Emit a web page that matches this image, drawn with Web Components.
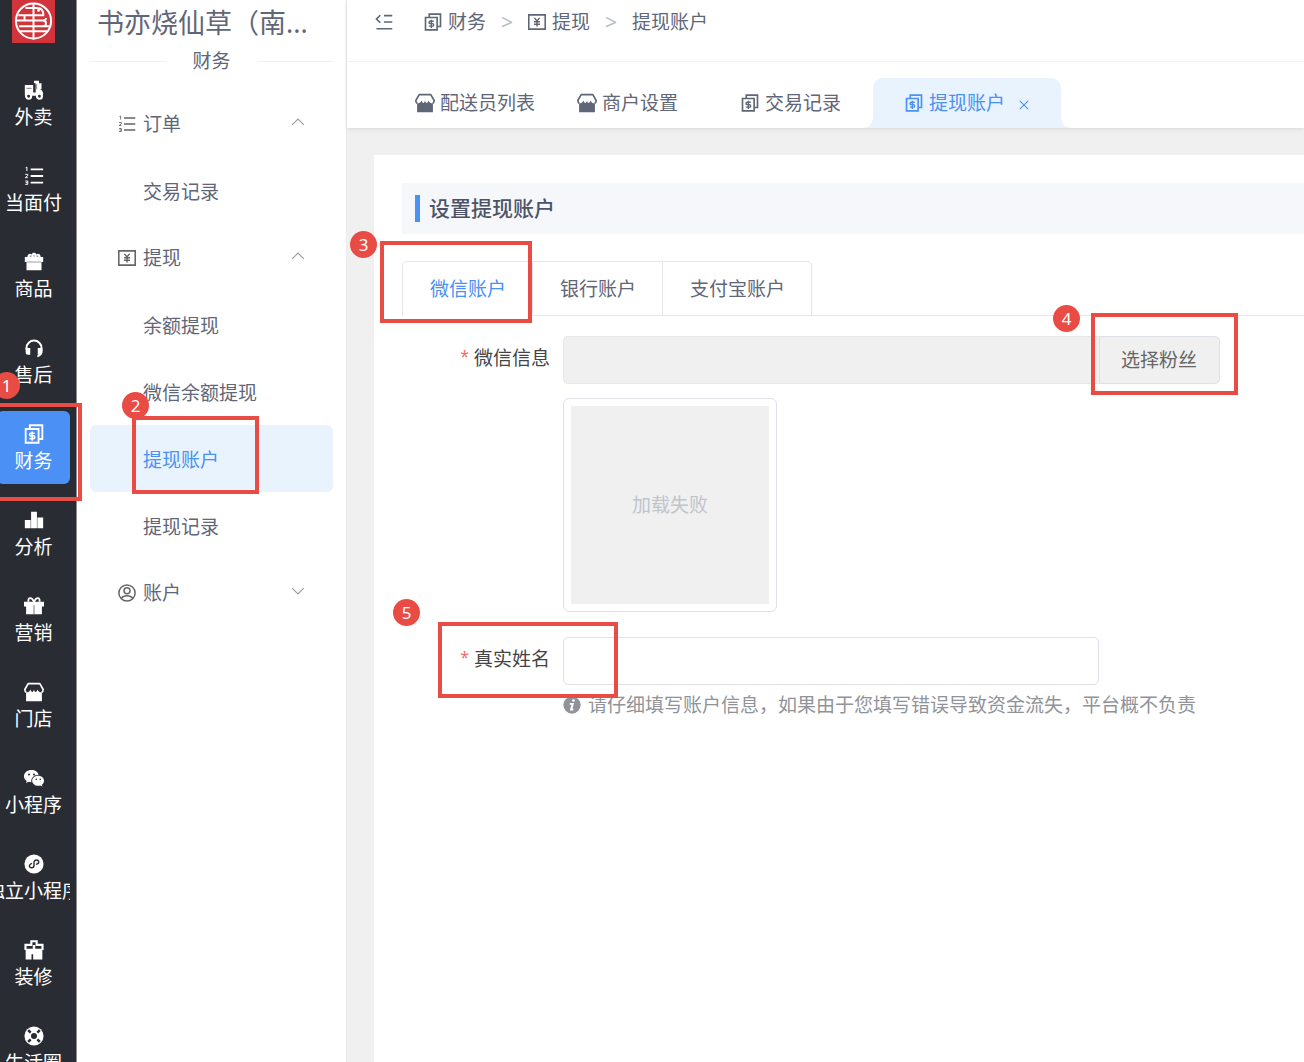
<!DOCTYPE html>
<html lang="zh-CN">
<head>
<meta charset="utf-8">
<meta name="viewport" content="width=device-width, initial-scale=1">
<title>提现账户</title>
<style>
  html, body { margin: 0; height: 100%; }
  body {
    font-family: "Noto Sans", "Noto Sans CJK SC", sans-serif;
    font-size: 19px;
    line-height: 28px;
    color: #5f6678;
    background: #f0f0f0;
    overflow: hidden;
    --blue: #4a90f5;
    --blue-soft: #e8f3fe;
    --line: #e4e6ec;
    --red: #e84c44;
  }
</style>
</head>
<body>
<admin-shell>
  <icon-rail slot="rail">
    <rail-item icon="scooter">外卖</rail-item>
    <rail-item icon="list">当面付</rail-item>
    <rail-item icon="basket">商品</rail-item>
    <rail-item icon="headset">售后</rail-item>
    <rail-item icon="bill" active>财务</rail-item>
    <rail-item icon="chart">分析</rail-item>
    <rail-item icon="gift">营销</rail-item>
    <rail-item icon="shop">门店</rail-item>
    <rail-item icon="wechat">小程序</rail-item>
    <rail-item icon="mini">独立小程序</rail-item>
    <rail-item icon="brush">装修</rail-item>
    <rail-item icon="circle">生活圈</rail-item>
  </icon-rail>

  <side-menu slot="menu" store="书亦烧仙草（南..." heading="财务">
    <menu-group icon="list" label="订单" open>
      <menu-link>交易记录</menu-link>
    </menu-group>
    <menu-group icon="yen" label="提现" open>
      <menu-link>余额提现</menu-link>
      <menu-link>微信余额提现</menu-link>
      <menu-link active>提现账户</menu-link>
      <menu-link>提现记录</menu-link>
    </menu-group>
    <menu-group icon="user" label="账户"></menu-group>
  </side-menu>

  <crumb-bar slot="top"></crumb-bar>
  <page-tabs slot="top">
    <page-tab slot="pinned" icon="shop" pinned>配送员列表</page-tab>
    <page-tab slot="pinned" icon="shop" pinned>商户设置</page-tab>
    <page-tab icon="bill">交易记录</page-tab>
    <page-tab icon="bill" active>提现账户</page-tab>
  </page-tabs>

  <account-card>
    <section-title>设置提现账户</section-title>
    <account-tabs></account-tabs>
    <fan-field></fan-field>
    <name-field></name-field>
  </account-card>
</admin-shell>

<step-mark n="1" x="-10" y="403" w="92" h="98" cx="6" cy="385"></step-mark>
<step-mark n="2" x="132" y="416" w="127" h="78" cx="135" cy="405"></step-mark>
<step-mark n="3" x="380" y="241" w="152" h="82" cx="363" cy="244"></step-mark>
<step-mark n="4" x="1091" y="313" w="147" h="82" cx="1066" cy="318"></step-mark>
<step-mark n="5" x="438" y="622" w="180" h="76" cx="406" cy="612"></step-mark>

<script>
const ICONS = {
  scooter: `<path fill="currentColor" d="M1 6h10v9h3V4h-2V1h6v3h3v7h-2c3 1 4 3 4 6l-1 2H1z"/><path stroke="#2a2c34" stroke-opacity=".5" stroke-width="1.500" d="M3 10h6M15 5v6"/><circle cx="5.500" cy="19.500" r="3" fill="#2a2c34" stroke="currentColor" stroke-width="2.600"/><circle cx="18.500" cy="19.500" r="3" fill="#2a2c34" stroke="currentColor" stroke-width="2.600"/>`,
  list: `<path d="M8 4h15M8 12h15M8 20h15" stroke="currentColor" stroke-width="2.200"/><path d="M2 2l1.500-.6V6M1.500 10h3v1.500l-3 2.500h3M1.500 18h3v4h-3M2 20h2.500" fill="none" stroke="currentColor" stroke-width="1.200"/>`,
  basket: `<path fill="currentColor" d="M1 6h3c0-3 3-5 5-3 1-3 5-3 6 0 2-2 5 0 5 3h3v6H1zM3 12h18v10H3z"/><path stroke="#2a2c34" stroke-opacity=".35" stroke-width="1.600" d="M3 12h18"/><path stroke="#2a2c34" stroke-opacity=".6" stroke-width="1.400" d="M7 5.500l2-1M12 5.500V4M17 5.500l-2-1"/>`,
  headset: `<path fill="none" stroke="currentColor" stroke-width="2.300" d="M3 14v-2a9 9 0 0 1 18 0v4c0 4-2 5-5 6"/><path fill="currentColor" d="M2 12h5.500v8H5a3 3 0 0 1-3-3zM16.500 12H22v5a3 3 0 0 1-3 3h-2.500z"/>`,
  bill: `<path fill="none" stroke="currentColor" stroke-width="2.200" d="M7 6V1.500h15V18h-4M2 6h15.500v16.500H2z"/><path fill="none" stroke="currentColor" stroke-width="1.900" d="M13 11H8.200c-2 0-2 3.200 0 3.200h3.200c2 0 2 3.300 0 3.300H6.500M9.800 9v11"/>`,
  chart: `<path fill="currentColor" d="M1 12h7v10H1zM8.500 2h7v20h-7zM16 9h7v13h-7z"/>`,
  gift: `<path fill="none" stroke="currentColor" stroke-width="2.200" d="M12 7C9 0 4 2 5.500 7M12 7c3-7 8-5 6.500 0"/><path fill="currentColor" d="M0 7h24v5.500H0zM2.500 12h19v10h-19z"/><path stroke="#2a2c34" stroke-opacity=".5" stroke-width="1.500" d="M12 11v11"/>`,
  shop: `<path fill="none" stroke="currentColor" stroke-width="2" stroke-linejoin="round" d="M3 12.500c-1.500-.5-2-2-2-3.500l4-7h14l4 7c0 1.500-.5 3-2 3.500"/><path fill="currentColor" d="M2.500 12.500c2.500 0 4.500-1.200 5.300-3.500 1 4 3.500 4 4.200 0 .7 4 3.200 4 4.200 0 .8 2.300 2.800 3.500 5.300 3.500v10.500h-19z"/>`,
  wechat: `<path fill="currentColor" fill-rule="evenodd" d="M9 2.500c-5 0-9 3.200-9 7.300 0 2.300 1.200 4.300 3.200 5.600L2.500 18l3-1.500c1 .3 2 .5 3.300.5-.9-5 3.200-9 8.700-9C16.700 4.800 13.200 2.500 9 2.500zM6 6.500a1.200 1.200 0 1 1 0 2.400 1.200 1.200 0 0 1 0-2.400zm6 0a1.200 1.200 0 1 1 0 2.400 1.200 1.200 0 0 1 0-2.400z"/><path fill="currentColor" fill-rule="evenodd" d="M17 9.200c-4 0-7.200 2.700-7.200 6.100s3.200 6.100 7.200 6.100c.9 0 1.700-.1 2.500-.4l2.500 1.300-.6-2.200c1.600-1.200 2.600-2.900 2.600-4.800 0-3.400-3.100-6.100-7-6.100zm-2.300 3.300a1 1 0 1 1 0 2 1 1 0 0 1 0-2zm4.800 0a1 1 0 1 1 0 2 1 1 0 0 1 0-2z"/>`,
  mini: `<circle cx="12" cy="12" r="11.500" fill="currentColor"/><path fill="none" stroke="#2a2c34" stroke-width="1.700" stroke-linecap="round" d="M9 11.500c-3 .5-3.500 5 0 5 2 0 3-1.200 3-2.700V10c0-1.500 1.200-2.800 3-2.800 3.500 0 3.500 4.500 0 5"/>`,
  brush: `<path fill="none" stroke="currentColor" stroke-width="2.600" d="M1.800 12V5.800h7V1.500h6.400v4.300h7V12"/><path fill="currentColor" d="M2 10.500h20v13H11V17H9v6.500H2zM10.500 6h3v5h-3z"/>`,
  circle: `<circle cx="12" cy="12" r="11.500" fill="currentColor"/><circle cx="12" cy="12" r="3.600" fill="#2a2c34"/><path stroke="#2a2c34" stroke-width="3" d="M5 5l3 3M19 5l-3 3M5 19l3-3M19 19l-3-3"/>`,
  yen: `<path fill="none" stroke="currentColor" stroke-width="2.200" d="M1 2.500h22v19H1z"/><path fill="none" stroke="currentColor" stroke-width="2" d="M8.500 6.500l3.500 4 3.500-4M12 10v8M8 11.500h8M8 15h8"/>`,
  user: `<circle cx="12" cy="12" r="10.800" fill="none" stroke="currentColor" stroke-width="2"/><circle cx="12" cy="9" r="4" fill="none" stroke="currentColor" stroke-width="2"/><path fill="none" stroke="currentColor" stroke-width="2" d="M4.500 19c3-4.500 12-4.500 15 0"/>`,
  fold: `<path fill="none" stroke="currentColor" stroke-width="2.200" d="M7 3L2 8l5 5M12 3.500h11M12 12h11M2 21h21"/>`,
  up: `<path fill="none" stroke="currentColor" stroke-width="2" d="M2 17L12 7l10 10"/>`,
  down: `<path fill="none" stroke="currentColor" stroke-width="2" d="M2 7l10 10L22 7"/>`,
  close: `<path stroke="currentColor" stroke-width="2.600" d="M2 2l20 20M22 2L2 22"/>`,
  info: `<circle cx="12" cy="12" r="11.500" fill="currentColor"/><path fill="none" stroke="#fff" stroke-width="2.600" d="M9 10.500h4l-2.200 7.500h3"/><circle cx="14" cy="6" r="1.800" fill="#fff"/>`,
  logo: `<path fill="#d2343c" d="M0 0h24v24H0z"/><g fill="none" stroke="#fff" stroke-width="1.100"><circle cx="12" cy="11.700" r="9.800"/><path d="M12 2v20M7.500 4.500H14q3.500 0 3.500 4H3.500M2.500 11.500H17q2 0 2 1.600t-2 1.600H4M17 11.500q2 0 2-1.500M7 8.500v3M4.500 17.500h15M21 14.700h-4"/></g><circle cx="14.800" cy="5.800" r=".8" fill="#fff"/>`
};

/* Shared base: renders each element's markup once into an open shadow root. */
class Base extends HTMLElement {
  connectedCallback() {
    if (!this.shadowRoot) this.attachShadow({ mode: 'open' }).innerHTML = this.render();
  }
  attr(name) { return this.getAttribute(name) || ''; }
}
const define = (name, render) =>
  customElements.define(name, class extends Base { render() { return render(this); } });

const RESET = `
  * { box-sizing: border-box; }
  a { color: inherit; text-decoration: none; }
  button { font: inherit; color: inherit; background: none; border: 0; padding: 0; margin: 0; cursor: pointer; }
  input { font: inherit; margin: 0; }
`;

define('ui-icon', el => `
  <style>:host { display: block; flex: none; width: var(--size, 18px); height: var(--size, 18px); } svg { display: block; width: 100%; height: 100%; }</style>
  <svg viewBox="0 0 24 24" aria-hidden="true">${ICONS[el.attr('name')]}</svg>`);

define('admin-shell', () => `
  <style>
    :host { display: flex; height: 100vh; overflow: hidden; }
    main { flex: 1; min-width: 0; display: flex; flex-direction: column; }
    .top { background: #fff; box-shadow: 0 1px 4px rgba(0,0,0,.1); position: relative; }
    .body { flex: 1; min-height: 0; display: flex; padding: 27px 0 0 27px; }
    .body ::slotted(*) { flex: 1; }
  </style>
  <slot name="rail"></slot>
  <slot name="menu"></slot>
  <main><div class="top"><slot name="top"></slot></div><div class="body"><slot></slot></div></main>`);

define('icon-rail', () => `
  <style>
    :host { display: block; flex: none; width: 77px; background: #2a2c34; color: #fff; border-right: 1px solid #8b8d92; box-sizing: border-box; overflow: hidden; }
    .logo { --size: 43px; padding: 0 0 24px 12px; }
    nav { display: flex; flex-direction: column; gap: 13px; margin-left: -3px; width: 73px; }
  </style>
  <div class="logo"><ui-icon name="logo"></ui-icon></div>
  <nav><slot></slot></nav>`);

define('rail-item', el => `
  <style>${RESET}
    :host { display: block; }
    a { display: flex; flex-direction: column; align-items: center; gap: 3px; height: 73px; padding-top: 13px; border-radius: 6px; overflow: hidden; --size: 20px; }
    :host([active]) a { background: var(--blue); }
    span { white-space: nowrap; }
  </style>
  <a href="#"><ui-icon name="${el.attr('icon')}"></ui-icon><span><slot></slot></span></a>`);

define('side-menu', el => `
  <style>
    :host { display: block; flex: none; width: 270px; box-sizing: border-box; padding: 0 13px 0 13px; background: #fff; border-right: 1px solid #ececee; }
    h1 { margin: 0; padding: 2px 0 0 7px; font-size: 27px; font-weight: 400; line-height: 42px; height: 47px; box-sizing: border-box; white-space: nowrap; }
    .heading { display: flex; align-items: center; gap: 27px; padding-bottom: 15px; }
    .heading::before, .heading::after { content: ""; flex: 1; border-top: 1px solid #efeff2; }
  </style>
  <h1>${el.attr('store')}</h1>
  <div class="heading">${el.attr('heading')}</div>
  <nav><slot></slot></nav>`);

define('menu-group', el => `
  <style>${RESET}
    :host { display: block; }
    button { display: flex; align-items: center; gap: 7px; width: 100%; height: 67px; padding: 0 28px; text-align: left; }
    span { flex: 1; }
    .lead { color: #666; }
    .arrow { --size: 14px; color: #9a9da5; margin-bottom: 4px; }
  </style>
  <button type="button" aria-expanded="${el.hasAttribute('open')}">
    <ui-icon class="lead" name="${el.attr('icon')}"></ui-icon><span>${el.attr('label')}</span>
    <ui-icon class="arrow" name="${el.hasAttribute('open') ? 'up' : 'down'}"></ui-icon>
  </button>
  <slot></slot>`);

define('menu-link', () => `
  <style>${RESET}
    :host { display: block; }
    a { display: flex; align-items: center; height: 67px; padding: 2px 0 0 53px; border-radius: 6px; }
    :host([active]) a { background: var(--blue-soft); color: var(--blue); }
  </style>
  <a href="#"><slot></slot></a>`);

define('crumb-bar', () => `
  <style>${RESET}
    :host { display: flex; align-items: center; gap: 31px; height: 62px; padding: 0 28px 18px; box-sizing: border-box; border-bottom: 1px solid #f3f3f5; }
    nav { display: flex; align-items: center; gap: 15px; }
    a { display: flex; align-items: center; gap: 6px; }
    i { font-style: normal; font-size: 21px; color: #b9bdc8; }
  </style>
  <button type="button" aria-label="收起菜单"><ui-icon name="fold"></ui-icon></button>
  <nav aria-label="路径">
    <a href="#"><ui-icon name="bill"></ui-icon>财务</a><i>&gt;</i>
    <a href="#"><ui-icon name="yen"></ui-icon>提现</a><i>&gt;</i>
    <a href="#">提现账户</a>
  </nav>`);

define('page-tabs', () => `
  <style>
    :host { display: flex; gap: 10px; padding: 16px 0 0 47px; }
    div { display: flex; }
  </style>
  <div><slot name="pinned"></slot></div>
  <div><slot></slot></div>`);

define('page-tab', el => `
  <style>${RESET}
    :host { display: flex; align-items: center; gap: 14px; height: 50px; padding: 0 32px; position: relative; white-space: nowrap; box-sizing: border-box; }
    :host([pinned]) { padding: 0 21px; }
    :host([pinned]) a { gap: 5px; --size: 20px; }
    a { display: flex; align-items: center; gap: 6px; }
    button { --size: 10px; padding-top: 3px; }
    :host([active]) { background: var(--blue-soft); color: var(--blue); border-radius: 10px 10px 0 0; }
    :host([active])::before, :host([active])::after { content: ""; position: absolute; bottom: 0; width: 9px; height: 9px; }
    :host([active])::before { right: 100%; background: radial-gradient(circle at 0 0, transparent 8px, var(--blue-soft) 9px); }
    :host([active])::after { left: 100%; background: radial-gradient(circle at 100% 0, transparent 8px, var(--blue-soft) 9px); }
  </style>
  <a href="#"><ui-icon name="${el.attr('icon')}"></ui-icon><span><slot></slot></span></a>
  ${el.hasAttribute('active') ? '<button type="button" aria-label="关闭"><ui-icon name="close"></ui-icon></button>' : ''}`);

define('account-card', () => `
  <style>:host { display: block; min-width: 0; box-sizing: border-box; background: #fff; padding: 28px 0 0 28px; }</style>
  <slot></slot>`);

define('section-title', () => `
  <style>
    :host { display: flex; align-items: center; height: 51px; padding-left: 13px; background: #f5f7fa; }
    h2 { margin: 0; padding-left: 9px; border-left: 5px solid var(--blue); font-size: 21px; line-height: 27px; font-weight: 500; color: #4d5366; }
  </style>
  <h2><slot></slot></h2>`);

define('account-tabs', () => `
  <style>${RESET}
    :host { display: flex; margin-top: 27px; }
    :host::after { content: ""; flex: 1; border-bottom: 1px solid var(--line); }
    button { height: 55px; padding: 0 26px 0 27px; border: 1px solid var(--line); border-left-width: 0; }
    button[aria-selected="true"] { border-left-width: 1px; border-bottom-color: transparent; border-top-left-radius: 5px; color: var(--blue); }
    button:last-child { border-top-right-radius: 5px; }
  </style>
  <button type="button" role="tab" aria-selected="true">微信账户</button>
  <button type="button" role="tab" aria-selected="false">银行账户</button>
  <button type="button" role="tab" aria-selected="false">支付宝账户</button>`);

const FIELD = `${RESET}
  :host { display: flex; gap: 13px; padding-right: 28px; }
  label { flex: none; width: 148px; height: 44px; display: flex; align-items: center; justify-content: flex-end; gap: 5px; color: #444; }
  label i { font-style: normal; color: #f56c6c; font-size: 16px; padding-bottom: 5px; }
  .control { flex: 1; min-width: 0; }
  input { height: 48px; min-width: 0; padding: 0 18px; border: 1px solid #dfe1e9; border-radius: 5px; color: #444; }
`;

define('fan-field', () => `
  <style>${FIELD}
    :host { margin-top: 20px; }
    .group { display: flex; max-width: 657px; }
    input { flex: 1; background: #f0f0f0; border-color: #e6e7eb; border-right: 0; border-radius: 5px 0 0 5px; }
    button { flex: none; height: 48px; padding: 0 22px 0 21px; color: #666; background: #f0f0f0; border: 1px solid #dfe1e9; border-radius: 0 5px 5px 0; }
    .frame { width: 214px; height: 214px; margin-top: 14px; padding: 7px; border: 1px solid #dfe1e9; border-radius: 6px; display: flex; }
    .empty { flex: 1; display: flex; align-items: center; justify-content: center; background: #f0f0f0; color: #c0c4cc; }
  </style>
  <label for="fan"><i>*</i>微信信息</label>
  <div class="control">
    <div class="group"><input id="fan" type="text" disabled><button type="button">选择粉丝</button></div>
    <div class="frame"><div class="empty">加载失败</div></div>
  </div>`);

define('name-field', () => `
  <style>${FIELD}
    :host { margin-top: 25px; }
    input { display: block; width: 100%; max-width: 536px; background: #fff; }
    p { display: flex; align-items: center; gap: 7px; margin: 6px 0 0; color: #909399; white-space: nowrap; }
  </style>
  <label for="real"><i>*</i>真实姓名</label>
  <div class="control">
    <input id="real" type="text">
    <p><ui-icon name="info"></ui-icon>请仔细填写账户信息，如果由于您填写错误导致资金流失，平台概不负责</p>
  </div>`);

/* Numbered red frame that floats over the page. */
define('step-mark', el => `
  <style>
    :host { display: block; pointer-events: none; }
    div { position: absolute; box-sizing: border-box; }
    .frame { left: ${el.attr('x')}px; top: ${el.attr('y')}px; width: ${el.attr('w')}px; height: ${el.attr('h')}px; border: 4px solid var(--red); }
    .dot { left: ${el.attr('cx') - 13}px; top: ${el.attr('cy') - 13}px; width: 27px; height: 27px; border-radius: 50%; background: var(--red); color: #fff; font-size: 17px; line-height: 27px; text-align: center; }
  </style>
  <div class="frame"></div><div class="dot">${el.attr('n')}</div>`);
</script>
</body>
</html>
